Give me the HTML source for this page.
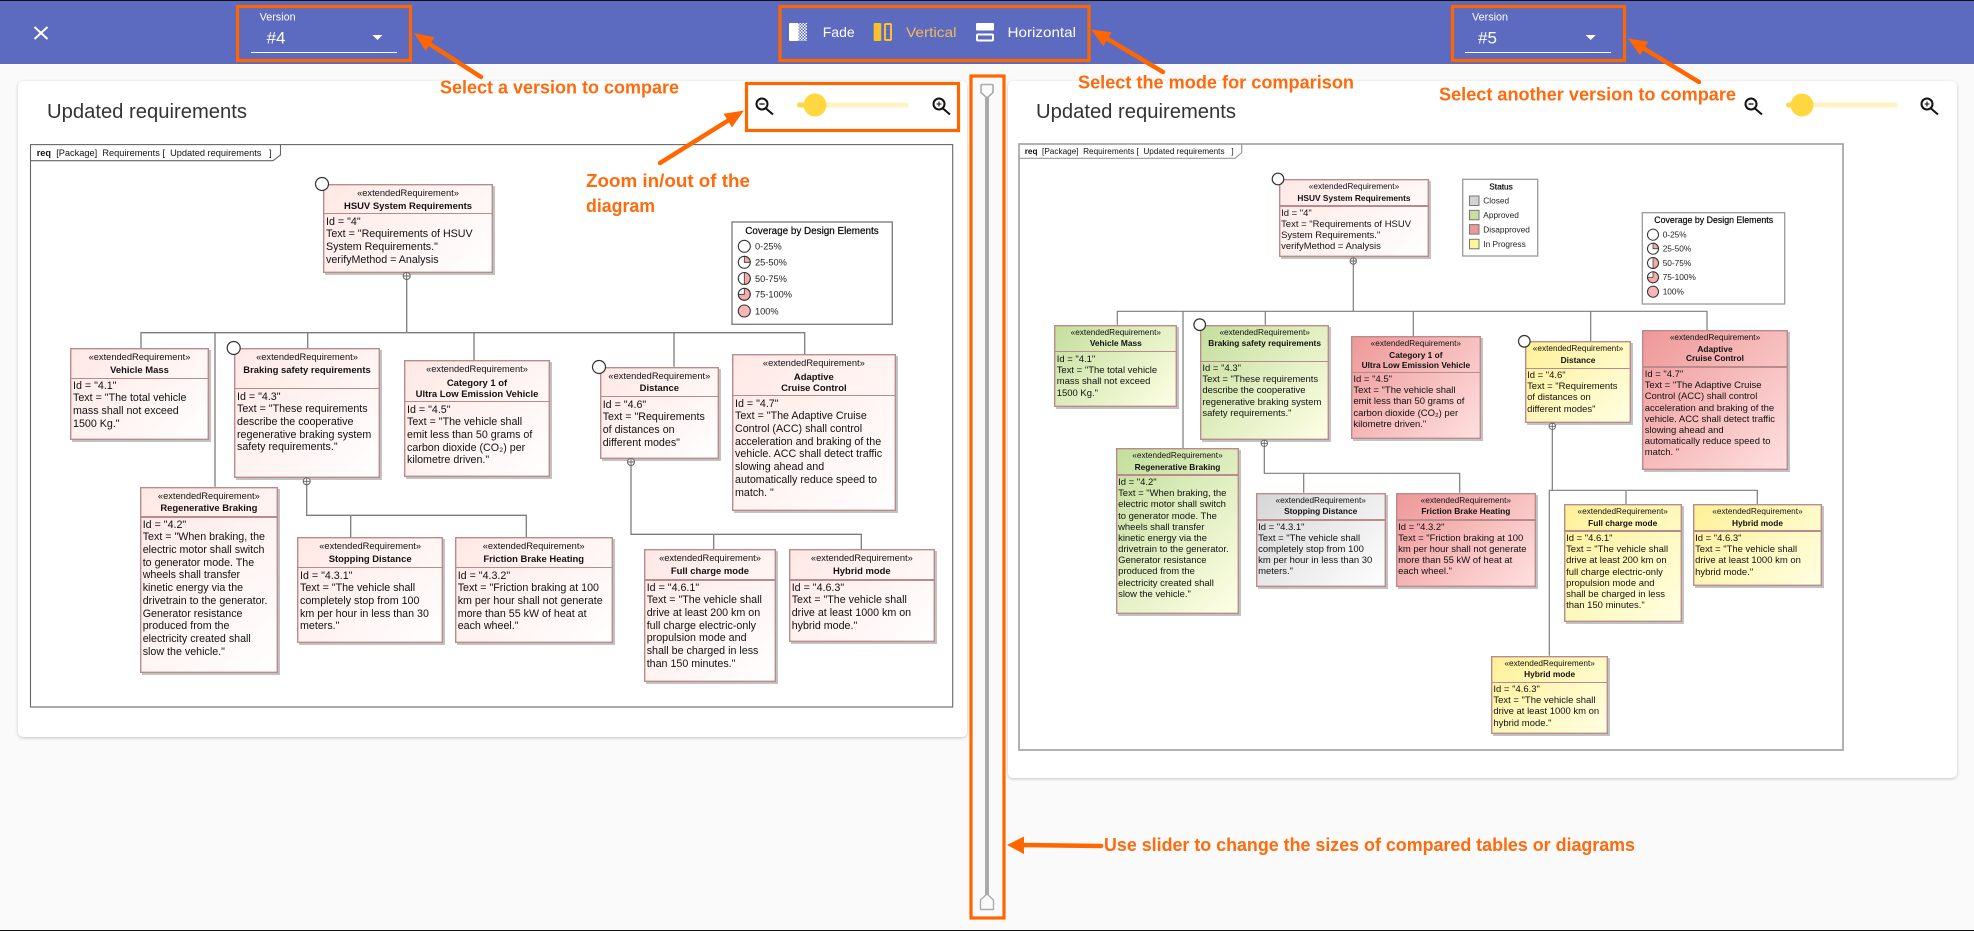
<!DOCTYPE html>
<html lang="en"><head><meta charset="utf-8"><title>Compare versions</title>
<style>
html,body{margin:0;padding:0;width:1974px;height:931px;overflow:hidden;background:#fafafa;font-family:"Liberation Sans",sans-serif;color:#111}
#hd{position:absolute;left:0;top:0;width:1974px;height:64px;background:#5c6bc0}
#tl{position:absolute;left:0;top:0;width:1974px;height:1px;background:#111;z-index:9}
#bl{position:absolute;left:0;top:930px;width:1974px;height:1px;background:#111;z-index:9}
.card{position:absolute;background:#fff;border-radius:5px;box-shadow:0 1px 3px rgba(0,0,0,.22)}
svg{position:absolute;left:0;top:0}
.b{position:absolute;box-shadow:inset 0 0 0 1.4px #bb8b8b,2px 2px 0 #c2c2c2;background:linear-gradient(135deg,#ffe8e5,#fff)}
.b p{position:absolute;margin:0;white-space:nowrap}
.b u{position:absolute;left:0;right:0;height:1.3px;background:#bb8b8b;text-decoration:none}
.s,.n{left:0;right:0;text-align:center}
.n{font-weight:bold}
.L .s{font-size:9.3px;line-height:12px;top:3px}
.L .n{font-size:9.45px;line-height:11px;top:16.5px}
.L .t{font-size:10.7px;line-height:12.7px;left:3px}
.R .s{font-size:8.25px;line-height:10px;top:3px}
.R .n{font-size:8.35px;line-height:9.5px;top:14.5px}
.R .t{font-size:9.47px;line-height:11.15px;left:2.4px}
.g{background:linear-gradient(135deg,#c3de9c,#ffffe6)}
.r{background:linear-gradient(135deg,#ee9797,#ffe0e0)}
.y{background:linear-gradient(135deg,#fff097,#ffffe2)}
.w{background:linear-gradient(135deg,#d6d6d6,#fff)}
</style></head><body>
<div id="hd"></div><div id="tl"></div><div id="bl"></div>
<div class="card" style="left:18px;top:81px;width:949px;height:656px"></div>
<div class="card" style="left:1008px;top:81px;width:949px;height:697px"></div>

<svg width="1974" height="931" viewBox="0 0 1974 931" font-family="'Liberation Sans',sans-serif">
<defs>
<pattern id="ck" width="3" height="3" patternUnits="userSpaceOnUse"><rect width="3" height="3" fill="#5c6bc0"/><rect width="1.5" height="1.5" fill="#fff"/><rect x="1.5" y="1.5" width="1.5" height="1.5" fill="#fff"/></pattern>
<g id="c0"><circle r="6" fill="#fff" stroke="#333" stroke-width="1.1"/></g>
<g id="c1"><circle r="6" fill="#fff"/><path d="M0 0V-6A6 6 0 0 1 6 0Z" fill="#f3abab" stroke="#333" stroke-width=".8"/><circle r="6" fill="none" stroke="#333" stroke-width="1.1"/></g>
<g id="c2"><circle r="6" fill="#fff"/><path d="M0 -6A6 6 0 0 1 0 6Z" fill="#f3abab" stroke="#333" stroke-width=".8"/><circle r="6" fill="none" stroke="#333" stroke-width="1.1"/></g>
<g id="c3"><circle r="6" fill="#fff"/><path d="M0 0V-6A6 6 0 1 1 -6 0Z" fill="#f3abab" stroke="#333" stroke-width=".8"/><circle r="6" fill="none" stroke="#333" stroke-width="1.1"/></g>
<g id="c4"><circle r="6" fill="#f8b6b6" stroke="#333" stroke-width="1.1"/></g>
</defs>

<!-- header: close -->
<path d="M34.5 27L47.5 39M47.5 27L34.5 39" stroke="#fff" stroke-width="2" fill="none"/>
<!-- version selectors -->
<text x="259.6" y="20.5" font-size="10.8" fill="#fff" textLength="36" lengthAdjust="spacingAndGlyphs">Version</text>
<text x="266.6" y="43.5" font-size="17" fill="#fff">#4</text>
<path d="M372.5 35h10l-5 5z" fill="#fff"/><rect x="251" y="52" width="146" height="1" fill="#fff"/>
<text x="1472" y="20.5" font-size="10.8" fill="#fff" textLength="36" lengthAdjust="spacingAndGlyphs">Version</text>
<text x="1478" y="43.5" font-size="17" fill="#fff">#5</text>
<path d="M1585.7 35h10l-5 5z" fill="#fff"/><rect x="1465" y="52" width="146" height="1" fill="#fff"/>
<!-- mode -->
<rect x="789" y="23" width="9.5" height="18" rx="1" fill="#fff"/><rect x="798.5" y="23" width="8.5" height="18" fill="url(#ck)"/>
<text x="822.7" y="36.8" font-size="14" fill="#fff" textLength="32" lengthAdjust="spacingAndGlyphs">Fade</text>
<rect x="873.7" y="23" width="7.5" height="18" rx="1" fill="#fbc02d"/><rect x="885" y="24" width="6" height="16" rx="1" fill="none" stroke="#fbc02d" stroke-width="2"/>
<text x="906" y="36.8" font-size="14" fill="#f5b95a" textLength="50.5" lengthAdjust="spacingAndGlyphs">Vertical</text>
<rect x="976" y="23" width="18" height="7.5" rx="1" fill="#fff"/><rect x="977" y="34.5" width="16" height="6" rx="1" fill="none" stroke="#fff" stroke-width="2"/>
<text x="1007.5" y="36.8" font-size="14" fill="#fff" textLength="68.5" lengthAdjust="spacingAndGlyphs">Horizontal</text>

<!-- titles -->
<text x="47" y="118" font-size="20" fill="#333" textLength="200" lengthAdjust="spacingAndGlyphs">Updated requirements</text>
<text x="1036" y="118" font-size="20" fill="#333" textLength="200" lengthAdjust="spacingAndGlyphs">Updated requirements</text>

<!-- zoom controls -->
<g fill="none" stroke="#111" stroke-width="2"><circle cx="762" cy="104" r="5.5"/><path d="M766 108.5L773 114.5"/><path d="M759.5 104h5" stroke-width="1.3"/>
<circle cx="939" cy="104" r="5.5"/><path d="M943 108.5L950 114.5"/><path d="M936.5 104h5M939 101.5v5" stroke-width="1.1"/>
<circle cx="1751" cy="104" r="5.5"/><path d="M1755 108.5L1762 114.5"/><path d="M1748.5 104h5" stroke-width="1.3"/>
<circle cx="1927" cy="104" r="5.5"/><path d="M1931 108.5L1938 114.5"/><path d="M1924.5 104h5M1927 101.5v5" stroke-width="1.1"/></g>
<rect x="797" y="102.500" width="112" height="5" rx="2.500" fill="#fff3c4"/><rect x="797" y="102.500" width="18" height="5" rx="2.500" fill="#ffd54f"/><circle cx="815" cy="105" r="11.500" fill="#ffd740"/>
<rect x="1786" y="102.500" width="112" height="5" rx="2.500" fill="#fff3c4"/><rect x="1786" y="102.500" width="16" height="5" rx="2.500" fill="#ffd54f"/><circle cx="1802" cy="105" r="11.500" fill="#ffd740"/>

<!-- center slider -->
<rect x="985" y="97" width="4" height="798" fill="#aaa"/>
<path d="M982 84.500h10a1 1 0 0 1 1 1v7l-6 5.500-6-5.500v-7a1 1 0 0 1 1-1z" fill="#fafafa" stroke="#aaa" stroke-width="1.600"/>
<path d="M981 909.500h12a.5 .5 0 0 0 .5-.5v-9l-6.500-6-6.500 6v9a.5 .5 0 0 0 .5 .5z" fill="#fafafa" stroke="#aaa" stroke-width="1.400"/>

<!-- left frame -->
<rect x="30.500" y="144.600" width="922.200" height="562.400" fill="#fff" stroke="#666" stroke-width="1.100"/>
<path d="M30.500 160.700H273L280.500 155V144.600" fill="none" stroke="#666" stroke-width="1.100"/>
<text x="36.700" y="156" font-size="9.300" xml:space="preserve" fill="#111" textLength="235" lengthAdjust="spacingAndGlyphs"><tspan font-weight="bold">req</tspan>  [Package]  Requirements [  Updated requirements   ]</text>
<!-- left connectors -->
<g fill="none" stroke="#7c7c7c" stroke-width="1.300">
<path d="M406.700 276V332.700M141 348V332.700H804.700V354M215 332.700V486.700M307.700 332.700V348M474 332.700V360M674 332.700V366.700"/>
<path d="M306.700 481V515.300H526.300V537.300M350.700 515.300V537.300"/>
<path d="M631 462V534.300H861.300V549.300M713.700 534.300V549.300"/>
</g>
<!-- left legend -->
<rect x="732" y="222" width="160.300" height="102.300" fill="#fff" stroke="#777" stroke-width="1.300"/>
<text x="812" y="234" font-size="9.900" text-anchor="middle" stroke="#111" stroke-width=".2">Coverage by Design Elements</text>
<g font-size="9.250" fill="#222"><text x="755" y="249.600">0-25%</text><text x="755" y="265.300">25-50%</text><text x="755" y="282">50-75%</text><text x="755" y="297.600">75-100%</text><text x="755" y="314.300">100%</text></g>
<use href="#c0" x="744.300" y="246.300"/><use href="#c1" x="744.300" y="262.300"/><use href="#c2" x="744.300" y="278.500"/><use href="#c3" x="744.300" y="294.300"/><use href="#c4" x="744.300" y="311"/>

<!-- right frame -->
<rect x="1019" y="144" width="824" height="606" fill="#fff" stroke="#aaa" stroke-width="1.800"/>
<path d="M1019 158.300H1235L1241.700 152.700V144" fill="none" stroke="#999" stroke-width="1.200"/>
<text x="1024.700" y="154" font-size="8.300" xml:space="preserve" fill="#111" textLength="209" lengthAdjust="spacingAndGlyphs"><tspan font-weight="bold">req</tspan>  [Package]  Requirements [  Updated requirements   ]</text>
<!-- right connectors -->
<g fill="none" stroke="#7c7c7c" stroke-width="1.200">
<path d="M1353.300 261V311.300M1117.300 324.700V311.300H1707V330.300M1183 311.300V448M1265.300 311.300V324.700M1413.300 311.300V336M1590.700 311.300V341.300"/>
<path d="M1264.300 443V473.300H1459.700V492.700M1303.700 473.300V492.700"/>
<path d="M1552.300 426V490.300M1549.300 655.700V490.300H1757.300V504M1626 490.300V504"/>
</g>
<!-- right status legend -->
<rect x="1462.700" y="179.300" width="75" height="76.700" fill="#fff" stroke="#999" stroke-width="1.300"/>
<text x="1501" y="189.700" font-size="8.300" text-anchor="middle" stroke="#111" stroke-width=".2">Status</text>
<g stroke="#777" stroke-width="1"><rect x="1469.500" y="196" width="9.500" height="9.500" fill="#d3d3d3"/><rect x="1469.500" y="210.300" width="9.500" height="9.500" fill="#c5e0a0"/><rect x="1469.500" y="224.600" width="9.500" height="9.500" fill="#ee9797"/><rect x="1469.500" y="239.300" width="9.500" height="9.500" fill="#fff59d"/></g>
<g font-size="8.300" fill="#222"><text x="1483.300" y="203.700">Closed</text><text x="1483.300" y="218">Approved</text><text x="1483.300" y="232.300">Disapproved</text><text x="1483.300" y="247">In Progress</text></g>
<!-- right coverage legend -->
<rect x="1642.300" y="212.700" width="142.400" height="91.300" fill="#fff" stroke="#999" stroke-width="1.300"/>
<text x="1713.700" y="222.800" font-size="8.800" text-anchor="middle" stroke="#111" stroke-width=".2">Coverage by Design Elements</text>
<g font-size="8.300" fill="#222"><text x="1662.700" y="237.600">0-25%</text><text x="1662.700" y="251.600">25-50%</text><text x="1662.700" y="265.900">50-75%</text><text x="1662.700" y="280.200">75-100%</text><text x="1662.700" y="294.600">100%</text></g>
<use href="#c0" transform="translate(1653 234.700) scale(.92)"/><use href="#c1" transform="translate(1653 248.700) scale(.92)"/><use href="#c2" transform="translate(1653 263) scale(.92)"/><use href="#c3" transform="translate(1653 277.300) scale(.92)"/><use href="#c4" transform="translate(1653 291.700) scale(.92)"/>
</svg>

<!-- LEFT BOXES -->
<div class="b L" style="left:323px;top:184px;width:170px;height:89px"><p class="s">«extendedRequirement»</p><p class="n">HSUV System Requirements</p><u style="top:29px"></u><p class="t" style="top:31.650px">Id = "4"<br>Text = "Requirements of HSUV<br>System Requirements."<br>verifyMethod = Analysis</p></div>
<div class="b L" style="left:70px;top:348px;width:139px;height:92px"><p class="s">«extendedRequirement»</p><p class="n">Vehicle Mass</p><u style="top:29.700px"></u><p class="t" style="top:31.650px">Id = "4.1"<br>Text = "The total vehicle<br>mass shall not exceed<br>1500 Kg."</p></div>
<div class="b L" style="left:234px;top:348px;width:146px;height:130px"><p class="s">«extendedRequirement»</p><p class="n">Braking safety requirements</p><u style="top:40px"></u><p class="t" style="top:42.650px">Id = "4.3"<br>Text = "These requirements<br>describe the cooperative<br>regenerative braking system<br>safety requirements."</p></div>
<div class="b L" style="left:404px;top:360px;width:146px;height:117px"><p class="s">«extendedRequirement»</p><p class="n" style="top:17.500px">Category 1 of<br>Ultra Low Emission Vehicle</p><u style="top:41px"></u><p class="t" style="top:43.650px">Id = "4.5"<br>Text = "The vehicle shall<br>emit less than 50 grams of<br>carbon dioxide (CO₂) per<br>kilometre driven."</p></div>
<div class="b L" style="left:599.700px;top:366.700px;width:119.300px;height:92.300px"><p class="s">«extendedRequirement»</p><p class="n">Distance</p><u style="top:29.300px"></u><p class="t" style="top:31.950px">Id = "4.6"<br>Text = "Requirements<br>of distances on<br>different modes"</p></div>
<div class="b L" style="left:732px;top:354px;width:163.700px;height:157.300px"><p class="s">«extendedRequirement»</p><p class="n" style="top:17.500px">Adaptive<br>Cruise Control</p><u style="top:41px"></u><p class="t" style="top:43.650px">Id = "4.7"<br>Text = "The Adaptive Cruise<br>Control (ACC) shall control<br>acceleration and braking of the<br>vehicle. ACC shall detect traffic<br>slowing ahead and<br>automatically reduce speed to<br>match. "</p></div>
<div class="b L" style="left:139.700px;top:486.700px;width:138.300px;height:186.300px"><p class="s">«extendedRequirement»</p><p class="n">Regenerative Braking</p><u style="top:29.600px"></u><p class="t" style="top:31.950px">Id = "4.2"<br>Text = "When braking, the<br>electric motor shall switch<br>to generator mode. The<br>wheels shall transfer<br>kinetic energy via the<br>drivetrain to the generator.<br>Generator resistance<br>produced from the<br>electricity created shall<br>slow the vehicle."</p></div>
<div class="b L" style="left:297px;top:537.300px;width:146.300px;height:105.400px"><p class="s">«extendedRequirement»</p><p class="n">Stopping Distance</p><u style="top:29.700px"></u><p class="t" style="top:32.350px">Id = "4.3.1"<br>Text = "The vehicle shall<br>completely stop from 100<br>km per hour in less than 30<br>meters."</p></div>
<div class="b L" style="left:454.700px;top:537.300px;width:158px;height:105.400px"><p class="s">«extendedRequirement»</p><p class="n">Friction Brake Heating</p><u style="top:29.700px"></u><p class="t" style="top:32.350px">Id = "4.3.2"<br>Text = "Friction braking at 100<br>km per hour shall not generate<br>more than 55 kW of heat at<br>each wheel."</p></div>
<div class="b L" style="left:643.700px;top:549.300px;width:132.600px;height:133px"><p class="s">«extendedRequirement»</p><p class="n">Full charge mode</p><u style="top:30px"></u><p class="t" style="top:32.350px">Id = "4.6.1"<br>Text = "The vehicle shall<br>drive at least 200 km on<br>full charge electric-only<br>propulsion mode and<br>shall be charged in less<br>than 150 minutes."</p></div>
<div class="b L" style="left:788.700px;top:549.300px;width:146.300px;height:92.400px"><p class="s">«extendedRequirement»</p><p class="n">Hybrid mode</p><u style="top:30px"></u><p class="t" style="top:32.350px">Id = "4.6.3"<br>Text = "The vehicle shall<br>drive at least 1000 km on<br>hybrid mode."</p></div>

<!-- RIGHT BOXES -->
<div class="b R" style="left:1278.700px;top:179.300px;width:150.600px;height:78px"><p class="s">«extendedRequirement»</p><p class="n">HSUV System Requirements</p><u style="top:26px"></u><p class="t" style="top:28.400px">Id = "4"<br>Text = "Requirements of HSUV<br>System Requirements."<br>verifyMethod = Analysis</p></div>
<div class="b R g" style="left:1054.300px;top:324.700px;width:123px;height:82px"><p class="s">«extendedRequirement»</p><p class="n">Vehicle Mass</p><u style="top:26.300px"></u><p class="t" style="top:29.400px">Id = "4.1"<br>Text = "The total vehicle<br>mass shall not exceed<br>1500 Kg."</p></div>
<div class="b R g" style="left:1200px;top:324.700px;width:129.300px;height:115.600px"><p class="s">«extendedRequirement»</p><p class="n">Braking safety requirements</p><u style="top:36px"></u><p class="t" style="top:38.400px">Id = "4.3"<br>Text = "These requirements<br>describe the cooperative<br>regenerative braking system<br>safety requirements."</p></div>
<div class="b R r" style="left:1351px;top:336px;width:129.700px;height:103.300px"><p class="s">«extendedRequirement»</p><p class="n" style="top:15px">Category 1 of<br>Ultra Low Emission Vehicle</p><u style="top:36px"></u><p class="t" style="top:38.100px">Id = "4.5"<br>Text = "The vehicle shall<br>emit less than 50 grams of<br>carbon dioxide (CO₂) per<br>kilometre driven."</p></div>
<div class="b R y" style="left:1524.700px;top:341.300px;width:106.600px;height:82px"><p class="s">«extendedRequirement»</p><p class="n">Distance</p><u style="top:26.700px"></u><p class="t" style="top:28.800px">Id = "4.6"<br>Text = "Requirements<br>of distances on<br>different modes"</p></div>
<div class="b R r" style="left:1642.300px;top:330.300px;width:145.400px;height:139.700px"><p class="s">«extendedRequirement»</p><p class="n" style="top:14.500px">Adaptive<br>Cruise Control</p><u style="top:36px"></u><p class="t" style="top:38.800px">Id = "4.7"<br>Text = "The Adaptive Cruise<br>Control (ACC) shall control<br>acceleration and braking of the<br>vehicle. ACC shall detect traffic<br>slowing ahead and<br>automatically reduce speed to<br>match. "</p></div>
<div class="b R g" style="left:1115.700px;top:448px;width:123.600px;height:165.700px"><p class="s">«extendedRequirement»</p><p class="n">Regenerative Braking</p><u style="top:26.300px"></u><p class="t" style="top:29.100px">Id = "4.2"<br>Text = "When braking, the<br>electric motor shall switch<br>to generator mode. The<br>wheels shall transfer<br>kinetic energy via the<br>drivetrain to the generator.<br>Generator resistance<br>produced from the<br>electricity created shall<br>slow the vehicle."</p></div>
<div class="b R w" style="left:1255.700px;top:492.700px;width:130px;height:94px"><p class="s">«extendedRequirement»</p><p class="n">Stopping Distance</p><u style="top:26.600px"></u><p class="t" style="top:29px">Id = "4.3.1"<br>Text = "The vehicle shall<br>completely stop from 100<br>km per hour in less than 30<br>meters."</p></div>
<div class="b R r" style="left:1395.700px;top:492.700px;width:140.300px;height:94px"><p class="s">«extendedRequirement»</p><p class="n">Friction Brake Heating</p><u style="top:26.600px"></u><p class="t" style="top:29px">Id = "4.3.2"<br>Text = "Friction braking at 100<br>km per hour shall not generate<br>more than 55 kW of heat at<br>each wheel."</p></div>
<div class="b R y" style="left:1563.700px;top:504px;width:118px;height:118px"><p class="s">«extendedRequirement»</p><p class="n">Full charge mode</p><u style="top:26.300px"></u><p class="t" style="top:29.100px">Id = "4.6.1"<br>Text = "The vehicle shall<br>drive at least 200 km on<br>full charge electric-only<br>propulsion mode and<br>shall be charged in less<br>than 150 minutes."</p></div>
<div class="b R y" style="left:1692.700px;top:504px;width:129.600px;height:82px"><p class="s">«extendedRequirement»</p><p class="n">Hybrid mode</p><u style="top:26.300px"></u><p class="t" style="top:29.100px">Id = "4.6.3"<br>Text = "The vehicle shall<br>drive at least 1000 km on<br>hybrid mode."</p></div>
<div class="b R y" style="left:1491px;top:655.700px;width:117.300px;height:78.300px"><p class="s">«extendedRequirement»</p><p class="n">Hybrid mode</p><u style="top:26px"></u><p class="t" style="top:28.400px">Id = "4.6.3"<br>Text = "The vehicle shall<br>drive at least 1000 km on<br>hybrid mode."</p></div>

<!-- overlay: circles, plus signs, annotations -->
<svg width="1974" height="931" viewBox="0 0 1974 931" font-family="'Liberation Sans',sans-serif">
<g fill="#fff" stroke="#333" stroke-width="1.200">
<circle cx="322" cy="184" r="6.500"/><circle cx="233.700" cy="348" r="6.500"/><circle cx="599" cy="367" r="6.500"/>
<circle cx="1278" cy="179" r="5.800"/><circle cx="1199.700" cy="324.700" r="5.800"/><circle cx="1524.300" cy="341.300" r="5.800"/>
</g>
<g fill="#fff" stroke="#666" stroke-width="1">
<circle cx="406.700" cy="276" r="3.500"/><circle cx="306.700" cy="481.300" r="3.500"/><circle cx="631" cy="462" r="3.500"/>
<circle cx="1353.300" cy="261" r="3.200"/><circle cx="1264.300" cy="443.300" r="3.200"/><circle cx="1552.300" cy="426.300" r="3.200"/>
</g>
<path d="M403.200 276h7M406.700 272.500v7M303.200 481.300h7M306.700 477.800v7M627.500 462h7M631 458.500v7M1350.100 261h6.400M1353.300 257.800v6.400M1261.100 443.300h6.400M1264.300 440.100v6.400M1549.100 426.300h6.400M1552.300 423.100v6.400" stroke="#666" stroke-width=".9" fill="none"/>

<!-- orange frames -->
<g fill="none" stroke="#ff6600" stroke-width="3.200">
<rect x="237.500" y="6.500" width="173" height="54"/>
<rect x="780" y="6.500" width="309" height="54"/>
<rect x="1452.500" y="6.500" width="172" height="54"/>
<rect x="746.500" y="83.500" width="212" height="47"/>
<rect x="971" y="76" width="33" height="842"/>
</g>
<!-- arrows -->
<g stroke="#ff6600" stroke-width="4.500" stroke-linecap="round" fill="none">
<path d="M481 77L428 43"/><path d="M1163 72L1106 38"/><path d="M1699 82L1643 48"/><path d="M660 163L729 120"/><path d="M1101 846L1022 845"/>
</g>
<g fill="#ff6600">
<path d="M414 33L434.400 37.300L425.700 50.700Z"/>
<path d="M1091 29.500L1111.600 32.300L1103.400 46.100Z"/>
<path d="M1628 38.500L1648.500 41.600L1640.100 55.200Z"/>
<path d="M744 110.500L732 127.400L723.600 113.800Z"/>
<path d="M1007 845L1024 836.500V854Z"/>
</g>
<!-- annotations -->
<g font-size="18" font-weight="bold" fill="#ff6a0c">
<text x="440" y="93.500" textLength="239" lengthAdjust="spacingAndGlyphs">Select a version to compare</text>
<text x="1078" y="88.500" textLength="276" lengthAdjust="spacingAndGlyphs">Select the mode for comparison</text>
<text x="1439" y="100.500" textLength="297" lengthAdjust="spacingAndGlyphs">Select another version to compare</text>
<text x="586" y="187" textLength="164" lengthAdjust="spacingAndGlyphs">Zoom in/out of the</text>
<text x="586" y="212" textLength="69" lengthAdjust="spacingAndGlyphs">diagram</text>
<text x="1104" y="851" textLength="531" lengthAdjust="spacingAndGlyphs">Use slider to change the sizes of compared tables or diagrams</text>
</g>
</svg>
</body></html>
